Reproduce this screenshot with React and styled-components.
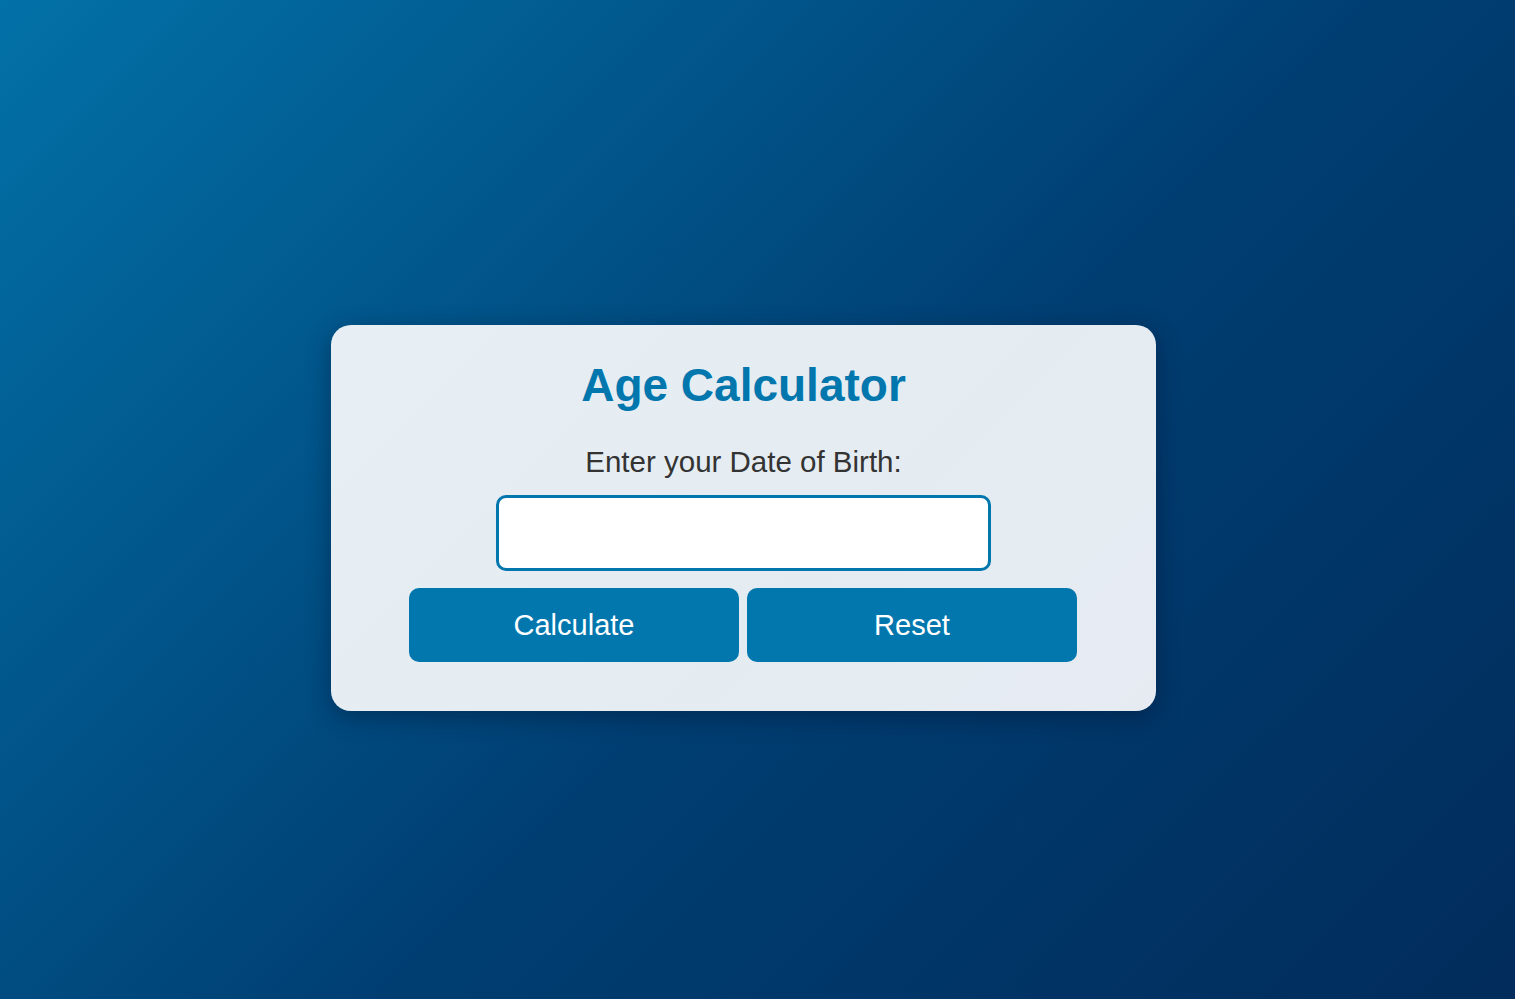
import React, { useState } from "react";
import styled, { createGlobalStyle } from "styled-components";

const GlobalStyle = createGlobalStyle`
  html, body {
    margin: 0;
    padding: 0;
    height: 100%;
  }
  body {
    font-family: "Liberation Sans", Arial, sans-serif;
    background: linear-gradient(135deg, #0271a7 0%, #003e72 55%, #012c5b 100%);
    min-height: 100vh;
  }
  #root {
    min-height: 100vh;
  }
`;

const Page = styled.div`
  min-height: 100vh;
  display: flex;
  align-items: center;
  justify-content: center;
`;

const Card = styled.div`
  width: 825px;
  box-sizing: border-box;
  padding: 34px 0 49px;
  margin-top: 37px;
  margin-right: 28px;
  background: linear-gradient(135deg, #e7eef4, #e4ecf1 60%, #e6ebf2);
  border-radius: 20px;
  box-shadow: 0 6px 24px rgba(0, 20, 50, 0.45);
  display: flex;
  flex-direction: column;
  align-items: center;
`;

const Title = styled.h1`
  margin: 0;
  font-size: 46px;
  font-weight: 700;
  color: #0277ae;
  line-height: 53px;
`;

const Label = styled.label`
  margin-top: 33px;
  font-size: 29.5px;
  color: #333;
  line-height: 33px;
`;

const DateInput = styled.input`
  margin-top: 17px;
  width: 495px;
  height: 76px;
  box-sizing: border-box;
  border: 3px solid #0277ae;
  border-radius: 10px;
  background: #fff;
  font-size: 22px;
  padding: 0 14px;
  outline: none;
`;

const Buttons = styled.div`
  margin-top: 17px;
  margin-right: 1px;
  display: flex;
  gap: 8px;
`;

const Button = styled.button`
  width: 330px;
  height: 74px;
  border: none;
  border-radius: 10px;
  background: #0277ae;
  color: #fff;
  font-family: "Liberation Sans", Arial, sans-serif;
  font-size: 29px;
  cursor: pointer;
  padding: 0;
`;

export default function App() {
  const [dob, setDob] = useState("");

  return (
    <Page>
      <GlobalStyle />
      <Card>
        <Title>Age Calculator</Title>
        <Label htmlFor="dob">Enter your Date of Birth:</Label>
        <DateInput
          id="dob"
          type="text"
          value={dob}
          onChange={(e) => setDob(e.target.value)}
        />
        <Buttons>
          <Button>Calculate</Button>
          <Button onClick={() => setDob("")}>Reset</Button>
        </Buttons>
      </Card>
    </Page>
  );
}
